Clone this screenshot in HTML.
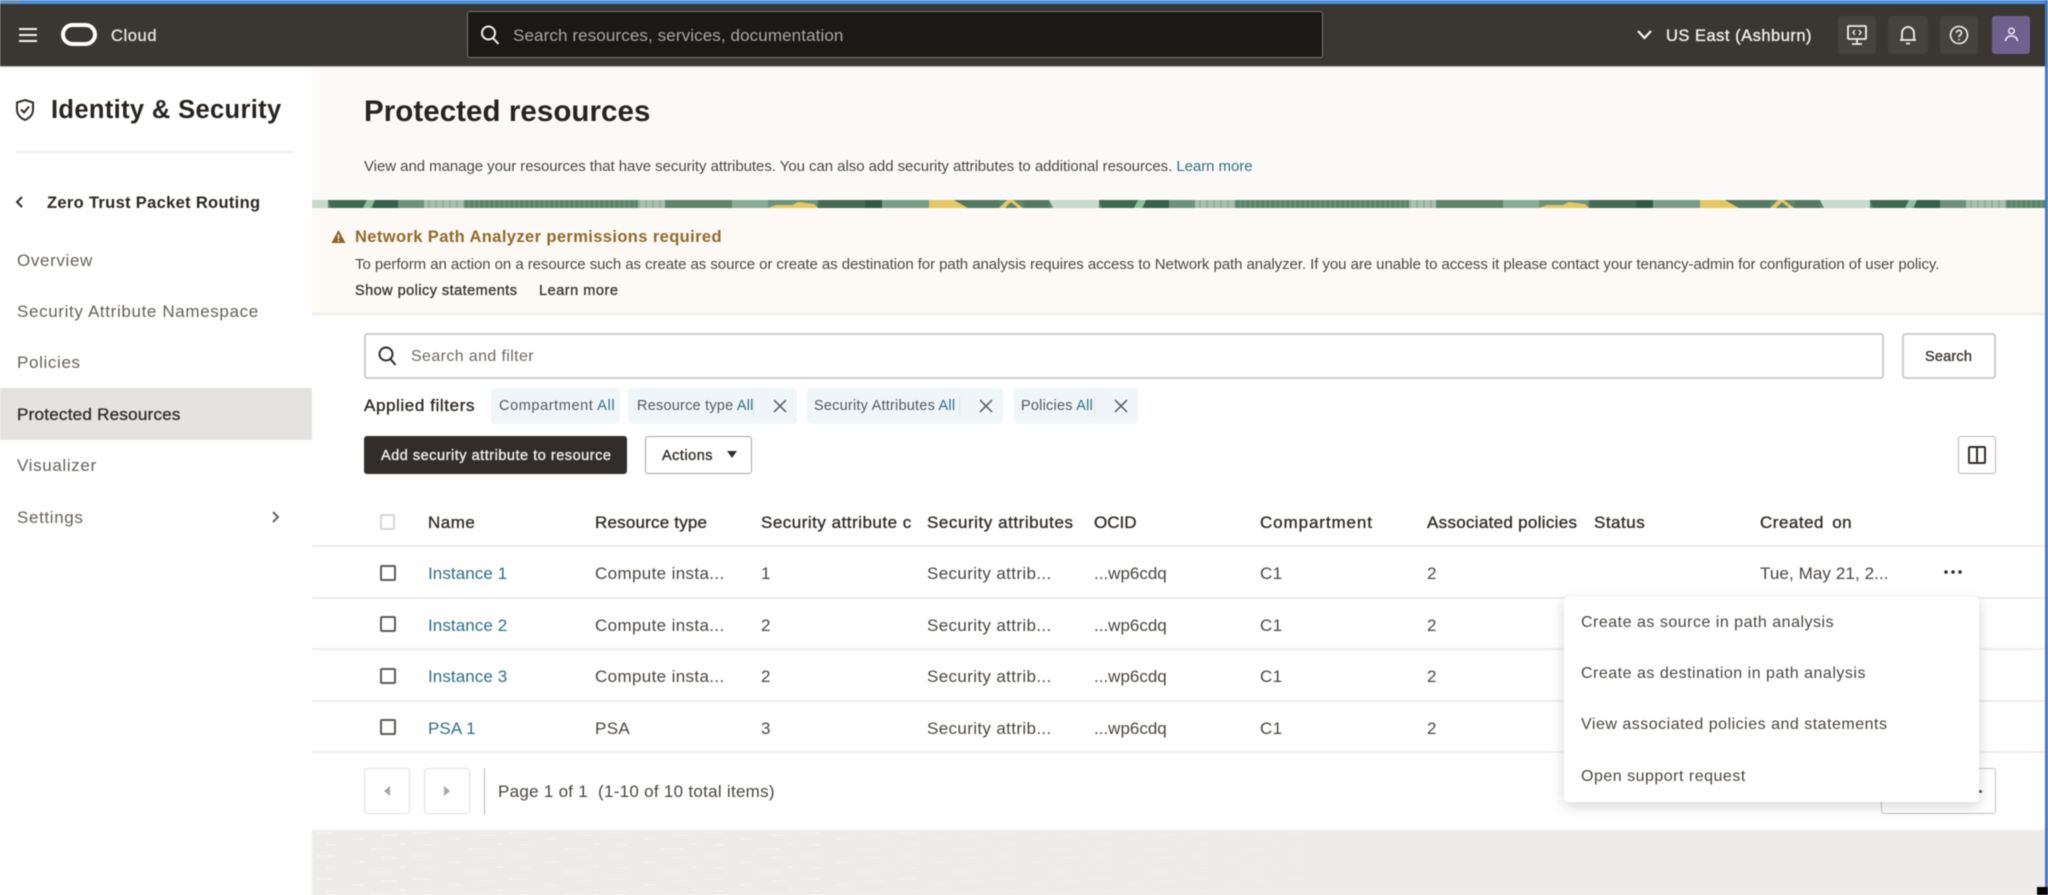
<!DOCTYPE html>
<html lang="en"><head><meta charset="utf-8"><title>Protected resources</title>
<style>
html,body{margin:0;padding:0;width:2048px;height:895px;overflow:hidden;background:#fff}
body{font-family:"Liberation Sans",sans-serif;color:#312d2a;position:relative}
#root{position:absolute;left:0;top:0;width:2048px;height:895px;overflow:hidden;background:#fff;filter:blur(.45px)}
.b{position:absolute;box-sizing:border-box}
.t{position:absolute;white-space:nowrap;line-height:20px;height:20px;margin-top:-9px;font-size:16px}
.m{-webkit-text-stroke:.35px currentColor}
.nav{color:#65615d;font-size:17px;letter-spacing:.64px;left:17px}
.row{position:absolute;left:312px;width:1733px;height:51.5px;border-bottom:2px solid #eeedeb;box-sizing:border-box}
.row .t{top:26px;color:#4a4642;font-size:17px;letter-spacing:.36px}
.row .o{letter-spacing:0}
.row a,.lnk{color:#2f6f88;text-decoration:none}
.row a{letter-spacing:.08px}
.th{top:521.5px;color:#312d2a;font-size:17px;letter-spacing:.5px}
.cb{position:absolute;left:67.5px;top:17.5px;width:16px;height:16px;box-sizing:border-box;border:2px solid #5f5b57;border-radius:2px}
.chip{position:absolute;top:388px;height:36px;background:#f0f5f7;border-radius:4px}
.chip .t{top:17px;font-size:14.5px;color:#4f5b60;letter-spacing:.22px}
.chip i{font-style:normal;color:#2f6f88}
.x{position:absolute;top:11px;width:14px;height:14px}
.sep{position:absolute;top:8px;width:1px;height:20px;background:#dfe5e8}
.hb{position:absolute;top:16px;height:38px;background:#46423e;border-radius:3px}
.mi{left:1581px;color:#4a4642;font-size:16px;letter-spacing:.5px}
</style></head><body><div id="root">

<!-- top window chrome -->
<div class="b" style="left:0;top:0;width:2048px;height:4px;background:#4b8fdc"></div>
<div class="b" style="left:2045px;top:0;width:3px;height:895px;background:#3f78c4"></div>
<div class="b" style="left:0;top:0;width:20px;height:3px;background:#6f8fb8"></div>

<!-- header -->
<div class="b" style="left:0;top:4px;width:2045px;height:62px;background:#3a3632"></div>
<div class="b" style="left:0;top:66px;width:2045px;height:1px;background:#b8b6b3"></div>
<svg class="b" style="left:18px;top:27px" width="20" height="16" viewBox="0 0 20 16"><path d="M1 2h18M1 8h18M1 14h18" stroke="#f4f3f1" stroke-width="2"/></svg>
<svg class="b" style="left:60px;top:22px" width="38" height="25" viewBox="0 0 38 25"><rect x="3" y="3" width="32" height="19" rx="9.5" fill="none" stroke="#fff" stroke-width="4"/></svg>
<span class="t m" style="left:111px;top:35px;color:#e6e4e1;font-size:16.5px;letter-spacing:.6px">Cloud</span>

<div class="b" style="left:467px;top:11px;width:856px;height:47px;background:#1b1917;border:1px solid #77736f;border-radius:3px"></div>
<svg class="b" style="left:479px;top:24px" width="22" height="22" viewBox="0 0 22 22"><circle cx="9.5" cy="9" r="6.5" fill="none" stroke="#f2f0ee" stroke-width="2"/><path d="M14 14l5.5 6" stroke="#f2f0ee" stroke-width="2"/></svg>
<span class="t" style="left:513px;top:35px;color:#a9a6a2;font-size:17px;letter-spacing:.11px">Search resources, services, documentation</span>

<svg class="b" style="left:1636px;top:29px" width="17" height="12" viewBox="0 0 17 12"><path d="M2 2l6.5 7L15 2" fill="none" stroke="#f4f3f1" stroke-width="2.2"/></svg>
<span class="t m" style="left:1666px;top:35px;color:#f0eeeb;font-size:16.5px;letter-spacing:.5px">US East (Ashburn)</span>

<div class="hb" style="left:1838px;width:38px"></div>
<svg class="b" style="left:1846px;top:24px" width="22" height="22" viewBox="0 0 22 22" fill="none" stroke="#f0eeeb" stroke-width="1.8"><rect x="2" y="2" width="18" height="13" rx="1"/><path d="M11 15v4M6 20h10"/><path d="M9 6L7 8.5l2 2.5M13 6l2 2.5L13 11" stroke-width="1.4"/></svg>
<div class="hb" style="left:1888px;width:40px"></div>
<svg class="b" style="left:1898px;top:24px" width="20" height="22" viewBox="0 0 20 22" fill="none" stroke="#f0eeeb" stroke-width="1.8"><path d="M4 16V9a6 6 0 0 1 12 0v7M2 16h16M8 19.5h4"/></svg>
<div class="hb" style="left:1940px;width:38px"></div>
<svg class="b" style="left:1949px;top:25px" width="20" height="20" viewBox="0 0 20 20" fill="none" stroke="#f0eeeb" stroke-width="1.6"><circle cx="10" cy="10" r="8.5"/><path d="M7.5 7.8a2.5 2.5 0 1 1 3.8 2.2c-.9.5-1.3 1-1.3 2"/><path d="M10 14v1.4"/></svg>
<div class="hb" style="left:1992px;width:38px;background:#70608f"></div>
<svg class="b" style="left:2003px;top:26px" width="17" height="18" viewBox="0 0 17 18" fill="none" stroke="#efeaf5" stroke-width="1.5"><circle cx="8.5" cy="5" r="2.8"/><path d="M2.5 15c.5-3.5 3-5 6-5s5.500 1.500 6 5"/></svg>

<!-- sidebar -->
<div class="b" style="left:0;top:67px;width:312px;height:828px;background:#fff"></div>
<svg class="b" style="left:15px;top:98px" width="20" height="24" viewBox="0 0 20 24" fill="none" stroke="#312d2a" stroke-width="2"><path d="M10 2l8 2.5v7c0 5-3.5 8.5-8 10.5-4.5-2-8-5.5-8-10.5v-7z"/><path d="M6 11.5l3 3 5-6"/></svg>
<span class="t" style="left:51px;top:109px;font-weight:700;font-size:25.5px;letter-spacing:.35px;color:#262320">Identity &amp; Security</span>
<div class="b" style="left:16px;top:151px;width:279px;height:2px;background:#eeedeb"></div>
<svg class="b" style="left:14px;top:195px" width="10" height="14" viewBox="0 0 10 14"><path d="M8 2L3 7l5 5" fill="none" stroke="#312d2a" stroke-width="2"/></svg>
<span class="t" style="left:47px;top:201.5px;font-weight:700;font-size:16.5px;letter-spacing:.32px;color:#2b2825">Zero Trust Packet Routing</span>
<span class="t nav" style="top:260px">Overview</span>
<span class="t nav" style="top:311px">Security Attribute Namespace</span>
<span class="t nav" style="top:362px">Policies</span>
<div class="b" style="left:0;top:388px;width:312px;height:52px;background:#e4e3e1"></div>
<span class="t nav m" style="top:414px;color:#312d2a;letter-spacing:.26px">Protected Resources</span>
<span class="t nav" style="top:465px">Visualizer</span>
<span class="t nav" style="top:517px">Settings</span>
<svg class="b" style="left:271px;top:510px" width="10" height="14" viewBox="0 0 10 14"><path d="M2 2l5 5-5 5" fill="none" stroke="#65615d" stroke-width="2"/></svg>

<!-- page header -->
<div class="b" style="left:312px;top:67px;width:1733px;height:133px;background:#fcfaf8"></div>
<span class="t" style="left:364px;top:111px;font-weight:700;font-size:29.5px;letter-spacing:.06px;color:#262320">Protected resources</span>
<span class="t" style="left:364px;top:166px;font-size:15px;letter-spacing:-.05px;color:#4a4642">View and manage your resources that have security attributes. You can also add security attributes to additional resources. <a class="lnk">Learn more</a></span>

<!-- strip -->
<svg class="b" style="left:312px;top:200px" width="1733" height="8" viewBox="0 0 1733 8" preserveAspectRatio="none">
<defs>
<pattern id="tx" width="5" height="8" patternUnits="userSpaceOnUse"><rect width="5" height="8" fill="#5e8a6c"/><rect x="1" width="1" height="8" fill="#6f9680"/><rect x="3" width="1" height="8" fill="#527d62"/></pattern>
<pattern id="lt" width="7" height="8" patternUnits="userSpaceOnUse"><rect width="7" height="8" fill="#a9c0ae"/><rect x="2" width="2" height="8" fill="#94ae9c"/></pattern>
<pattern id="st" x="16" width="771" height="8" patternUnits="userSpaceOnUse">
<rect width="771" height="8" fill="#5d8569"/>
<path d="M0 0h39l-3 8H3z" fill="#3f6a52"/>
<path d="M39 0h8l-4 8h-8z" fill="#8cc0a0"/>
<path d="M47 0h23v8H44z" fill="#35614a"/>
<rect x="70" width="26" height="8" fill="#6d9279"/>
<rect x="96" width="40" height="8" fill="url(#lt)"/>
<rect x="136" width="174" height="8" fill="url(#tx)"/>
<rect x="310" width="27" height="8" fill="url(#lt)"/>
<rect x="337" width="67" height="8" fill="#5d8569"/>
<rect x="404" width="36" height="8" fill="#8aab93"/>
<rect x="440" width="50" height="8" fill="#6d9279"/>
<path d="M440 8l8-3 16 0 6-3 16 2 4 4z" fill="#e4c765"/>
<rect x="490" width="47" height="8" fill="#466b54"/>
<rect x="537" width="17" height="8" fill="#2f5a42"/>
<rect x="554" width="47" height="8" fill="#7a9c85"/>
<path d="M601 0h25l14 8h-39z" fill="#e4c765"/>
<path d="M626 0h45v8h-31z" fill="#537a61"/>
<path d="M671 8l8-8h6l10 8h-5l-7-6-6 6z" fill="#e4c765"/>
<rect x="696" width="25" height="8" fill="#537a61"/>
<path d="M721 0h50v8h-46z" fill="#c5dacb"/>
</pattern>
</defs>
<rect width="16" height="8" fill="#c5dacb"/>
<rect x="16" width="1717" height="8" fill="url(#st)"/>
</svg>

<!-- alert -->
<div class="b" style="left:312px;top:208px;width:1733px;height:107px;background:#fdf9f4;border-bottom:2px solid #ecebe8"></div>
<svg class="b" style="left:331px;top:229px" width="15" height="15" viewBox="0 0 15 15"><path d="M7.5 1L14.500 14H.5z" fill="#8a6429"/><rect x="6.8" y="5.5" width="1.4" height="4.5" fill="#fcf9f3"/><rect x="6.8" y="11" width="1.4" height="1.5" fill="#fcf9f3"/></svg>
<span class="t" style="left:355px;top:236px;font-weight:700;font-size:16.5px;letter-spacing:.39px;color:#8f6a2c">Network Path Analyzer permissions required</span>
<span class="t" style="left:355px;top:264px;font-size:15px;letter-spacing:-.06px;color:#4a4642">To perform an action on a resource such as create as source or create as destination for path analysis requires access to Network path analyzer. If you are unable to access it please contact your tenancy-admin for configuration of user policy.</span>
<span class="t m" style="left:355px;top:290px;font-size:14.5px;letter-spacing:.46px;color:#3a3632">Show policy statements</span>
<span class="t m" style="left:539px;top:290px;font-size:14.5px;letter-spacing:.53px;color:#3a3632">Learn more</span>

<!-- search -->
<div class="b" style="left:364px;top:333px;width:1520px;height:46px;border:2px solid #cfcdca;border-radius:3px;background:#fff"></div>
<svg class="b" style="left:377px;top:345px" width="21" height="22" viewBox="0 0 21 22"><circle cx="9" cy="9" r="6.5" fill="none" stroke="#312d2a" stroke-width="2"/><path d="M13.5 14l5 6" stroke="#312d2a" stroke-width="2"/></svg>
<span class="t" style="left:411px;top:356px;font-size:16px;letter-spacing:.38px;color:#6d6965">Search and filter</span>
<div class="b" style="left:1902px;top:333px;width:94px;height:46px;border:2px solid #cfcdca;border-radius:4px;background:#fff"></div>
<span class="t m" style="left:1925px;top:356px;font-size:14.5px;letter-spacing:.2px;color:#3a3632">Search</span>

<!-- filters -->
<span class="t m" style="left:364px;top:405px;font-size:17px;letter-spacing:.6px;color:#2b2825">Applied filters</span>
<div class="chip" style="left:491px;width:129px"><span class="t" style="left:8px;letter-spacing:.6px">Compartment <i>All</i></span></div>
<div class="chip" style="left:628px;width:169px"><span class="t" style="left:9px">Resource type <i>All</i></span><div class="sep" style="left:125px"></div><svg class="x" style="left:145px" viewBox="0 0 14 14"><path d="M1 1l12 12M13 1L1 13" stroke="#4f5b60" stroke-width="1.5"/></svg></div>
<div class="chip" style="left:807px;width:196px"><span class="t" style="left:7px">Security Attributes <i>All</i></span><div class="sep" style="left:152px"></div><svg class="x" style="left:172px" viewBox="0 0 14 14"><path d="M1 1l12 12M13 1L1 13" stroke="#4f5b60" stroke-width="1.5"/></svg></div>
<div class="chip" style="left:1014px;width:124px"><span class="t" style="left:7px">Policies <i>All</i></span><div class="sep" style="left:80px"></div><svg class="x" style="left:100px" viewBox="0 0 14 14"><path d="M1 1l12 12M13 1L1 13" stroke="#4f5b60" stroke-width="1.5"/></svg></div>

<!-- action buttons -->
<div class="b" style="left:364px;top:436px;width:263px;height:38px;background:#312d2a;border-radius:3px"></div>
<span class="t m" style="left:381px;top:455px;font-size:14.5px;letter-spacing:.52px;color:#f2f0ee">Add security attribute to resource</span>
<div class="b" style="left:645px;top:436px;width:107px;height:38px;background:#fff;border:1.5px solid #a9a6a2;border-radius:3px"></div>
<span class="t m" style="left:662px;top:455px;font-size:14.5px;letter-spacing:.5px;color:#312d2a">Actions</span>
<svg class="b" style="left:727px;top:451px" width="10" height="7" viewBox="0 0 10 7"><path d="M0 0h10L5 7z" fill="#312d2a"/></svg>
<div class="b" style="left:1958px;top:436px;width:38px;height:38px;background:#fff;border:1.5px solid #b8b6b3;border-radius:3px"></div>
<svg class="b" style="left:1967px;top:445px" width="20" height="20" viewBox="0 0 20 20" fill="none" stroke="#312d2a" stroke-width="2"><rect x="2" y="2" width="16" height="16" rx="1"/><path d="M10 2v16"/></svg>

<!-- table head -->
<div class="b" style="left:379.5px;top:514px;width:15px;height:16px;border:2px solid #d8d7d4;border-radius:2px"></div>
<span class="t m th" style="left:428px">Name</span>
<span class="t m th" style="left:595px;letter-spacing:.2px">Resource type</span>
<span class="t m th" style="left:761px">Security attribute c</span>
<span class="t m th" style="left:927px;letter-spacing:.55px">Security attributes</span>
<span class="t m th" style="left:1094px;letter-spacing:0">OCID</span>
<span class="t m th" style="left:1260px;letter-spacing:.9px">Compartment</span>
<span class="t m th" style="left:1427px;letter-spacing:.3px">Associated policies</span>
<span class="t m th" style="left:1594px">Status</span>
<span class="t m th" style="left:1760px;word-spacing:3px">Created on</span>
<div class="b" style="left:312px;top:545px;width:1733px;height:2px;background:#eeedeb"></div>

<!-- table rows -->
<div class="row" style="top:547px"><div class="cb"></div><span class="t" style="left:116px"><a>Instance 1</a></span><span class="t" style="left:283px">Compute insta...</span><span class="t" style="left:449px">1</span><span class="t" style="left:615px">Security attrib...</span><span class="t o" style="left:782px">...wp6cdq</span><span class="t" style="left:948px">C1</span><span class="t" style="left:1115px">2</span><span class="t" style="left:1448px;letter-spacing:.1px">Tue, May 21, 2...</span>
<svg style="position:absolute;left:1631px;top:22px" width="20" height="6" viewBox="0 0 20 6"><g fill="#312d2a"><circle cx="3" cy="3" r="1.8"/><circle cx="10" cy="3" r="1.8"/><circle cx="17" cy="3" r="1.8"/></g></svg></div>
<div class="row" style="top:598.5px"><div class="cb"></div><span class="t" style="left:116px"><a>Instance 2</a></span><span class="t" style="left:283px">Compute insta...</span><span class="t" style="left:449px">2</span><span class="t" style="left:615px">Security attrib...</span><span class="t o" style="left:782px">...wp6cdq</span><span class="t" style="left:948px">C1</span><span class="t" style="left:1115px">2</span></div>
<div class="row" style="top:650px"><div class="cb"></div><span class="t" style="left:116px"><a>Instance 3</a></span><span class="t" style="left:283px">Compute insta...</span><span class="t" style="left:449px">2</span><span class="t" style="left:615px">Security attrib...</span><span class="t o" style="left:782px">...wp6cdq</span><span class="t" style="left:948px">C1</span><span class="t" style="left:1115px">2</span></div>
<div class="row" style="top:701.5px"><div class="cb"></div><span class="t" style="left:116px"><a>PSA 1</a></span><span class="t" style="left:283px">PSA</span><span class="t" style="left:449px">3</span><span class="t" style="left:615px">Security attrib...</span><span class="t o" style="left:782px">...wp6cdq</span><span class="t" style="left:948px">C1</span><span class="t" style="left:1115px">2</span></div>

<!-- pagination -->
<div class="b" style="left:364px;top:768px;width:46px;height:46px;border:1.5px solid #e2e1de;border-radius:3px"></div>
<svg class="b" style="left:383px;top:785px" width="8" height="12" viewBox="0 0 8 12"><path d="M7 1v10L1 6z" fill="#a9a6a2"/></svg>
<div class="b" style="left:424px;top:768px;width:46px;height:46px;border:1.5px solid #e2e1de;border-radius:3px"></div>
<svg class="b" style="left:443px;top:785px" width="8" height="12" viewBox="0 0 8 12"><path d="M1 1v10l6-5z" fill="#a9a6a2"/></svg>
<div class="b" style="left:484px;top:768px;width:1px;height:47px;background:#b8b6b3"></div>
<span class="t" style="left:498px;top:791px;font-size:17px;letter-spacing:.28px;color:#4a4642">Page 1 of 1&nbsp; (1-10 of 10 total items)</span>

<div class="b" style="left:1881px;top:768px;width:115px;height:46px;border:1.5px solid #c3c1be;border-radius:3px"></div>
<div class="b" style="left:1979px;top:790px;width:3px;height:3px;background:#55514d;border-radius:50%"></div>

<!-- menu -->
<div class="b" style="left:1564px;top:597px;width:415px;height:205px;background:#fff;border-radius:4px;box-shadow:0 4px 14px rgba(0,0,0,.17)"></div>
<span class="t mi" style="top:622px">Create as source in path analysis</span>
<span class="t mi" style="top:673px">Create as destination in path analysis</span>
<span class="t mi" style="top:724px">View associated policies and statements</span>
<span class="t mi" style="top:776px">Open support request</span>

<!-- footer bg -->
<svg class="b" style="left:312px;top:830px" width="1733" height="65" viewBox="0 0 1733 65">
<defs><pattern id="sp" width="97" height="23" patternUnits="userSpaceOnUse"><path d="M4 3h18M40 9h12M70 5h16M14 15h10M58 19h22M88 14h6" stroke="#f5f4f2" stroke-width="1.5"/></pattern>
<linearGradient id="fd" x1="0" x2="1"><stop offset="0" stop-color="#fff"/><stop offset=".4" stop-color="#fff" stop-opacity=".5"/><stop offset=".7" stop-color="#fff" stop-opacity="0"/></linearGradient>
<mask id="mk"><rect width="1733" height="65" fill="url(#fd)"/></mask></defs>
<rect width="1733" height="65" fill="#eeecea"/>
<rect width="1733" height="65" fill="url(#sp)" mask="url(#mk)"/>
</svg>

<div class="b" style="left:2037px;top:887px;width:11px;height:8px;background:#000"></div>
</div></body></html>
